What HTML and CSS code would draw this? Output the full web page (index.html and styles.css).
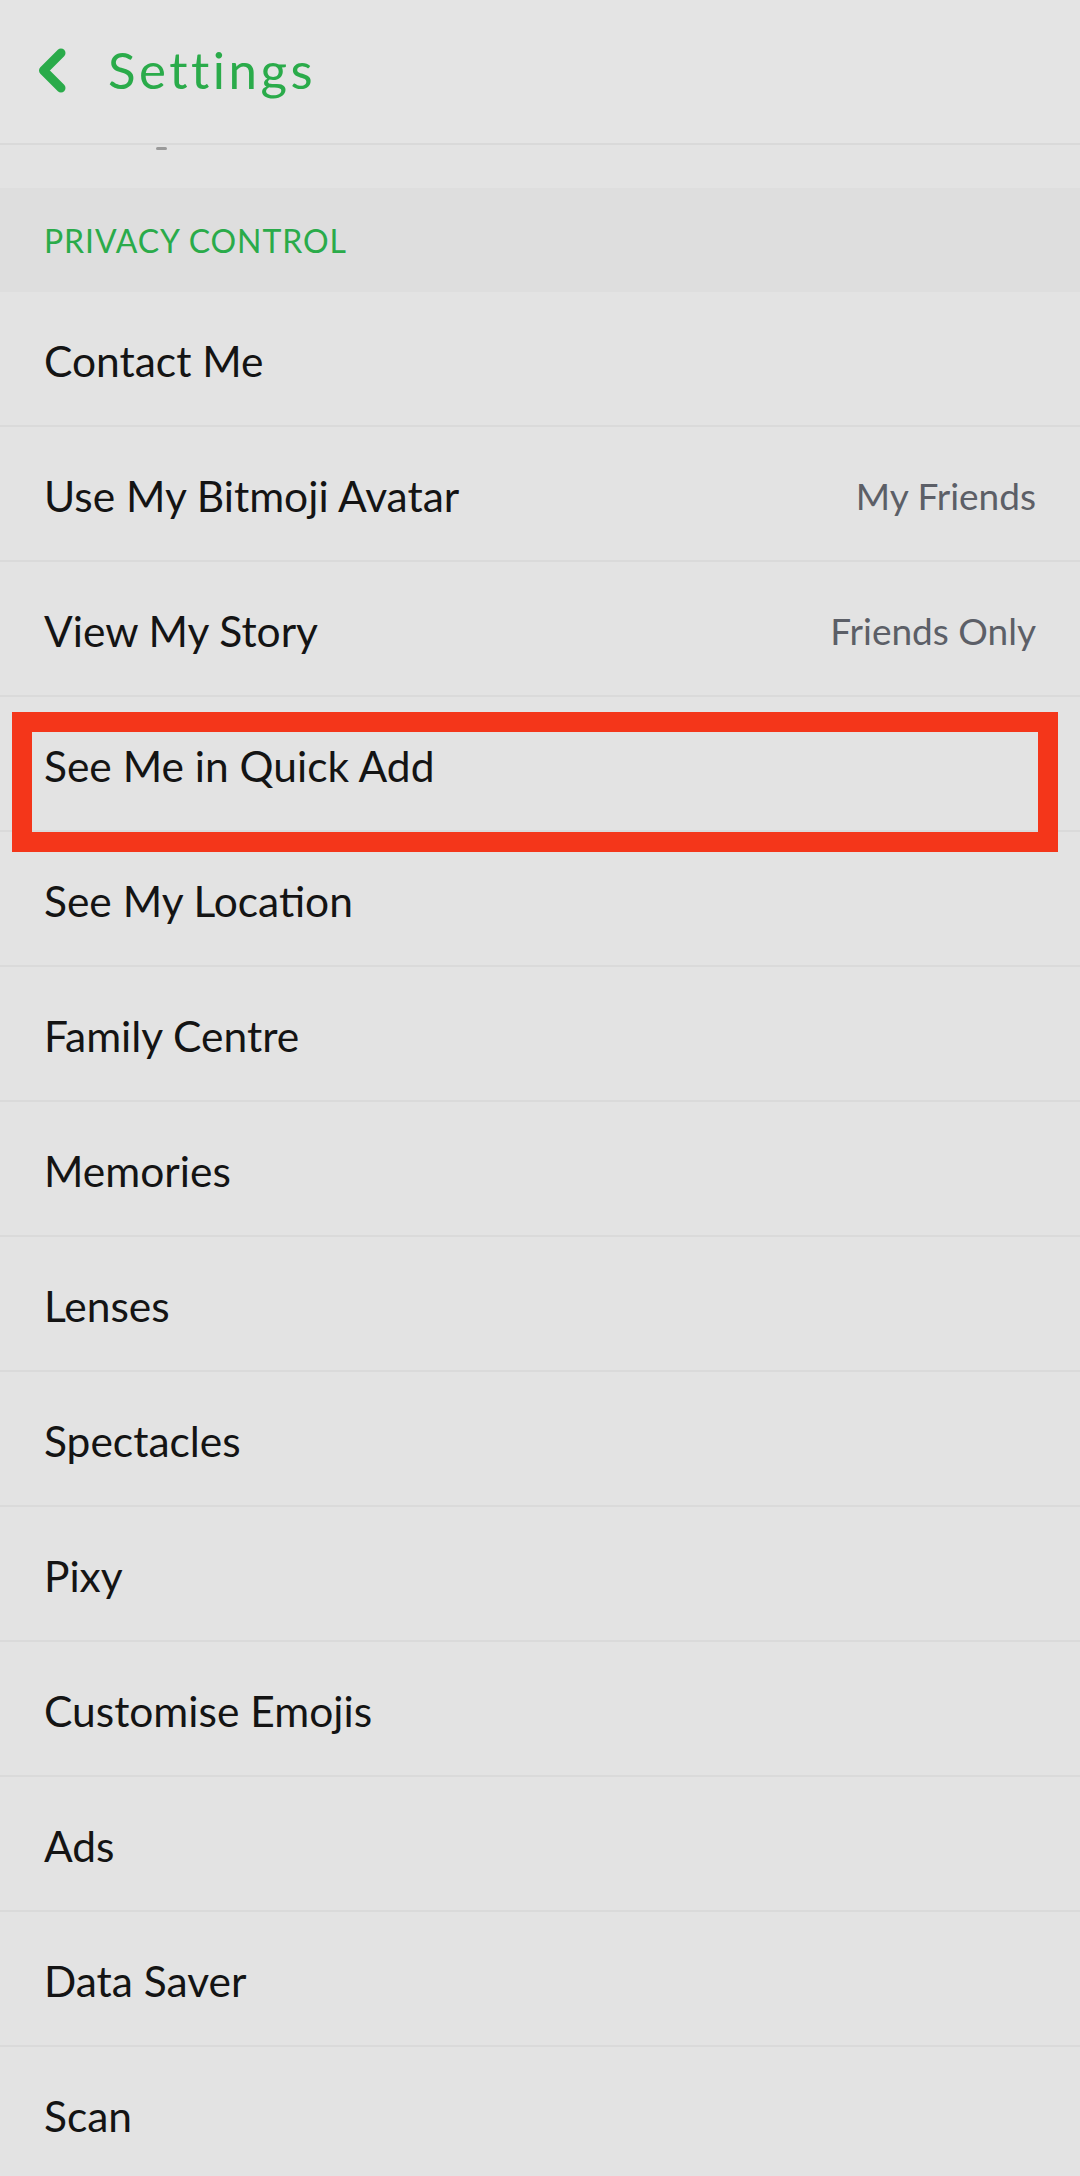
FILE: index.html
```html
<!DOCTYPE html>
<html lang="en">
<head>
<meta charset="utf-8">
<title>Settings</title>
<link rel="stylesheet" href="styles.css">
</head>
<body>
<div class="screen">
  <header class="topbar">
    <svg class="back" width="28" height="45" viewBox="0 0 28 45" aria-hidden="true">
      <path d="M23 5 L5.5 22.5 L23 40" fill="none" stroke="#2aab4a" stroke-width="9" stroke-linecap="round" stroke-linejoin="round"/>
    </svg>
    <h1 class="title">Settings</h1>
  </header>
  <div class="peek"><span class="peek-mark"></span></div>
  <div class="section-head">PRIVACY CONTROL</div>
  <ul class="list">
    <li class="row"><span class="label">Contact Me</span></li>
    <li class="row"><span class="label">Use My Bitmoji Avatar</span><span class="value">My Friends</span></li>
    <li class="row"><span class="label">View My Story</span><span class="value">Friends Only</span></li>
    <li class="row"><span class="label">See Me in Quick Add</span><span class="highlight"></span></li>
    <li class="row"><span class="label">See My Location</span></li>
    <li class="row"><span class="label">Family Centre</span></li>
    <li class="row"><span class="label">Memories</span></li>
    <li class="row"><span class="label">Lenses</span></li>
    <li class="row"><span class="label">Spectacles</span></li>
    <li class="row"><span class="label">Pixy</span></li>
    <li class="row"><span class="label">Customise Emojis</span></li>
    <li class="row"><span class="label">Ads</span></li>
    <li class="row"><span class="label">Data Saver</span></li>
    <li class="row"><span class="label">Scan</span></li>
  </ul>
</div>
</body>
</html>
```

FILE: styles.css
```css
* { box-sizing: border-box; }

html, body {
  margin: 0;
  padding: 0;
  background: #e3e3e3;
}

body {
  font-family: Lato, "Open Sans", "Liberation Sans", sans-serif;
  color: #141414;
}

.screen {
  width: 1080px;
  height: 2176px;
  overflow: hidden;
}

.topbar {
  height: 145px;
  display: flex;
  align-items: center;
  padding-left: 38px;
  gap: 42px;
  border-bottom: 2px solid #d9d9d9;
  background: #e4e4e4;
}

.back { display: block; flex: none; margin-top: -2px; }

.title {
  margin: 0;
  font-size: 51px;
  font-weight: 400;
  color: #2aab4a;
  letter-spacing: 3.5px;
  margin-top: -4px;
}

.peek {
  height: 43px;
  padding-top: 2px;
  padding-left: 156px;
}

.peek-mark {
  display: block;
  width: 11px;
  height: 3px;
  border-radius: 2px;
  background: #9a9a9a;
}

.section-head {
  height: 104px;
  display: flex;
  align-items: center;
  padding-left: 44px;
  background: #dedede;
  color: #2aab4a;
  font-size: 32px;
  letter-spacing: 0.9px;
}

.list {
  list-style: none;
  margin: 0;
  padding: 0;
}

.row {
  position: relative;
  height: 135px;
  display: flex;
  align-items: center;
  justify-content: space-between;
  padding: 4px 44px 0 44px;
  border-bottom: 2px solid #dadada;
}

.label {
  font-size: 42.5px;
  color: #141414;
}

.value {
  font-size: 37px;
  color: #5c5f67;
}

.highlight {
  position: absolute;
  left: 12px;
  right: 22px;
  top: 15px;
  height: 140px;
  border: 20px solid #f4361a;
}
```
